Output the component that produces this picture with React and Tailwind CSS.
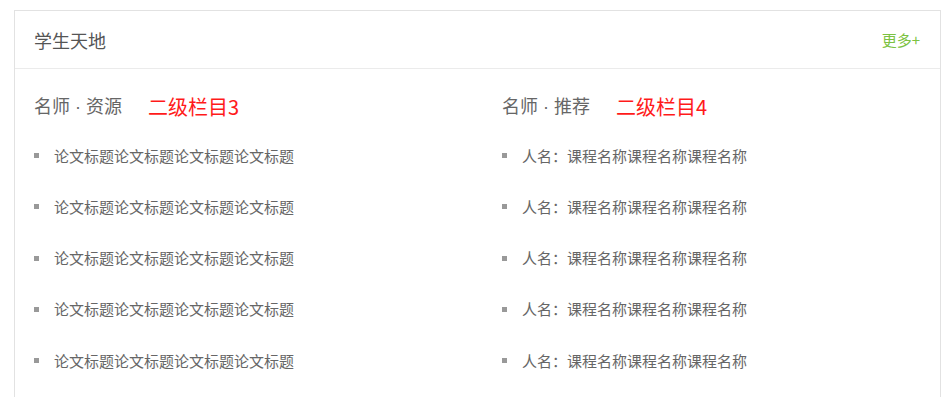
const papers = Array(5).fill('论文标题论文标题论文标题论文标题');
const courses = Array(5).fill('人名：课程名称课程名称课程名称');

function Column({ left, right, tag, items, className }) {
    return (
        <div className={className}>
            <div className="flex h-[24px] items-baseline">
                <span className="text-[18px] leading-[24px] text-[#666]">
                    {left}
                    <span className="font-['Liberation_Sans']"> · </span>
                    {right}
                </span>
                <span className="ml-[26px] translate-y-[2px] text-[20px] leading-[24px] text-[#ff1a1a]">{tag}</span>
            </div>
            <ul className="mt-[13px]">
                {items.map((text, i) => (
                    <li key={i} className="flex h-[51.25px] items-center">
                        <span className="size-[5px] shrink-0 bg-[#999]" />
                        <span className="ml-[15px] text-[15px] leading-[20px] text-[#666]">{text}</span>
                    </li>
                ))}
            </ul>
        </div>
    );
}

export default function App() {
    return (
        <div
            className="min-h-[397px] bg-white pl-[14px] pt-[10px]"
            style={{ fontFamily: '"Noto Sans CJK SC", "Noto Sans", sans-serif' }}
        >
            <div className="w-[927px] border border-[#e2e2e2] bg-white">
                <div className="flex h-[58px] items-center justify-between border-b border-[#ebebeb] pl-[19px] pr-[20px]">
                    <h2 className="text-[18px] leading-[24px] text-[#555]">学生天地</h2>
                    <a href="#" className="text-[15px] leading-[20px] text-[#7cc242]">更多+</a>
                </div>
                <div className="flex pl-[19px] pt-[24px] pb-[20px]">
                    <Column className="w-[468px] shrink-0" left="名师" right="资源" tag="二级栏目3" items={papers} />
                    <Column className="flex-1" left="名师" right="推荐" tag="二级栏目4" items={courses} />
                </div>
            </div>
        </div>
    );
}
